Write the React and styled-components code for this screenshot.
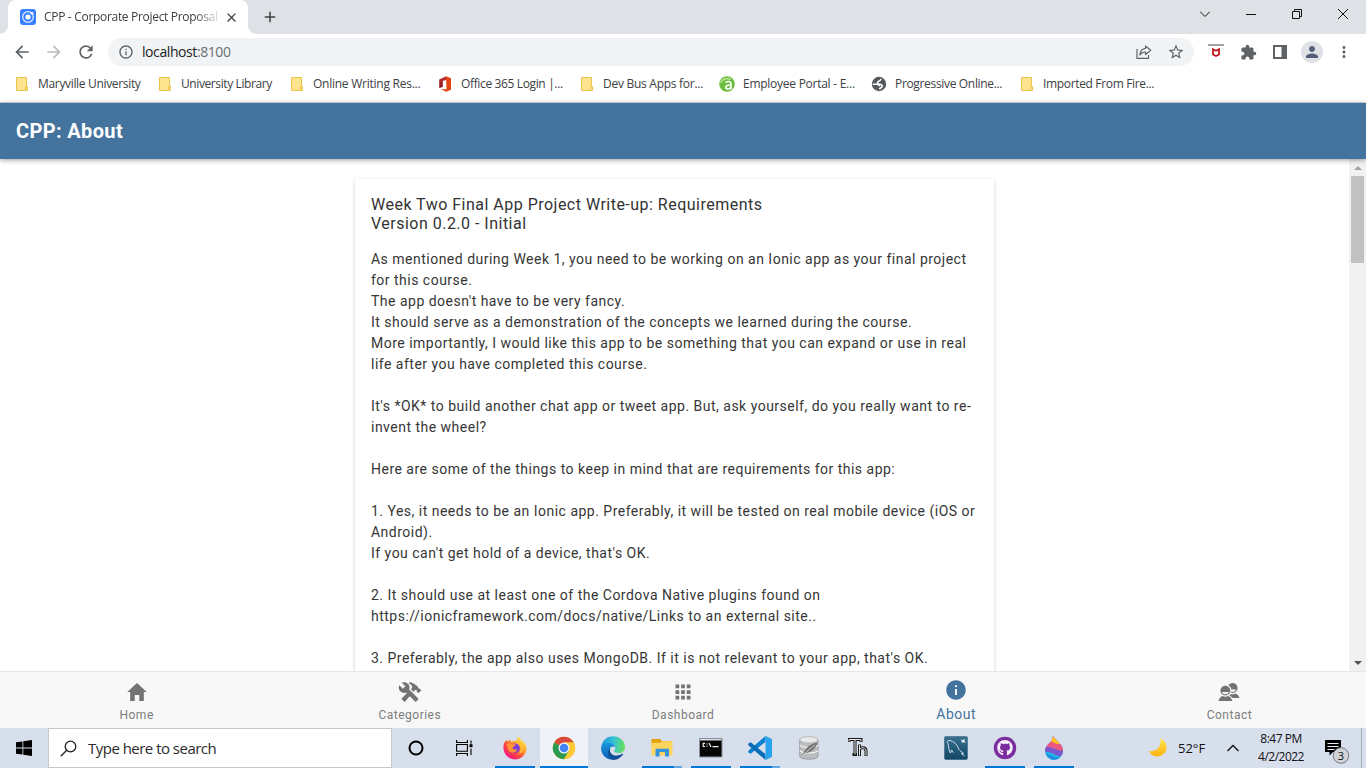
import React from "react";
import styled, { createGlobalStyle, css } from "styled-components";
import { IoMdHome, IoMdConstruct, IoMdApps, IoMdInformationCircle, IoMdContacts } from "react-icons/io";
import { MdArrowBack, MdArrowForward, MdRefresh, MdInfoOutline, MdStarBorder, MdExtension, MdMoreVert, MdPerson, MdClose, MdAdd } from "react-icons/md";
import { FaGithub } from "react-icons/fa";

const Global = createGlobalStyle`
  *, *::before, *::after { box-sizing: border-box; }
  html, body { margin: 0; height: 100%; overflow: hidden; }
  body { font-family: Roboto, "Liberation Sans", sans-serif; background: #fff; }
  svg { display: block; flex: none; }
`;

const uiFont = css`
  font-family: "Open Sans", "Noto Sans", sans-serif;
`;

const Screen = styled.div`
  display: flex;
  flex-direction: column;
  width: 1366px;
  height: 768px;
  overflow: hidden;
`;

/* ---------- Browser chrome ---------- */

const TabStrip = styled.div`
  display: flex;
  height: 34px;
  padding-left: 8px;
  background: #dee1e6;
  color: #3c4043;
`;

const BrowserTab = styled.div`
  position: relative;
  display: flex;
  align-items: center;
  width: 240px;
  padding: 0 9px 0 12px;
  background: #fff;
  border-radius: 8px 8px 0 0;
  &::before, &::after {
    content: "";
    position: absolute;
    bottom: 0;
    width: 8px;
    height: 8px;
  }
  &::before { left: -8px; background: radial-gradient(circle at 0 0, #dee1e6 7.5px, #fff 8px); }
  &::after { right: -8px; background: radial-gradient(circle at 100% 0, #dee1e6 7.5px, #fff 8px); }
`;

const TabTitle = styled.div`
  ${uiFont}
  flex: 1;
  margin: 0 6px 0 8px;
  white-space: nowrap;
  font-size: 12px;
  line-height: 18px;
  letter-spacing: -0.31px;
  mask-image: linear-gradient(to right, #000 152px, rgba(0, 0, 0, 0.15) 174px);
`;

const NewTab = styled.div`
  display: flex;
  align-items: center;
  padding-left: 13px;
`;

const WindowControls = styled.div`
  display: flex;
  margin-left: auto;
  color: #111;
`;

const WindowButton = styled.div`
  display: flex;
  align-items: center;
  justify-content: center;
  width: 46px;
  height: 28px;
`;

const Toolbar = styled.div`
  display: flex;
  align-items: center;
  height: 36px;
  background: #fff;
  color: #5f6368;
`;

const NavButtons = styled.div`
  display: flex;
  align-items: center;
  gap: 12px;
  width: 108px;
  padding-left: 12px;
`;

const AddressBar = styled.div`
  ${uiFont}
  display: flex;
  align-items: center;
  width: 1086px;
  height: 28px;
  padding: 0 9px 0 10px;
  border-radius: 14px;
  background: #f1f3f4;
  font-size: 14px;
  letter-spacing: -0.42px;
`;

const Url = styled.span`
  flex: 1;
  margin-left: 8px;
  padding-bottom: 2px;
  color: #202124;
  span { color: #6b6f74; }
`;

const AddressActions = styled.div`
  display: flex;
  align-items: center;
  gap: 15px;
`;

const Extensions = styled.div`
  display: flex;
  align-items: center;
  margin-left: 14px;
`;

const ExtSlot = styled.div`
  display: flex;
  justify-content: center;
  align-items: center;
  width: 32px;
  margin-left: ${(p) => (p.$first ? -8 : 0)}px;
`;

const Avatar = styled.div`
  display: flex;
  align-items: center;
  justify-content: center;
  width: 22px;
  height: 22px;
  border-radius: 50%;
  background: #dee1e6;
  color: #56607a;
`;

const BookmarksBar = styled.div`
  ${uiFont}
  display: flex;
  height: 33px;
  padding: 0 0 5px 14px;
  border-bottom: 1px solid #dadce0;
  background: #fff;
  color: #3c4043;
  font-size: 12px;
`;

const Bookmark = styled.div`
  display: flex;
  align-items: center;
  width: ${(p) => p.$width}px;
  white-space: nowrap;
  letter-spacing: ${(p) => p.$spacing}px;
  svg { margin-right: 8px; }
`;

/* ---------- App ---------- */

const AppHeader = styled.header`
  position: relative;
  z-index: 2;
  flex: none;
  display: flex;
  align-items: center;
  height: 56px;
  padding-left: 16px;
  background: #44739e;
  color: #fff;
  font-size: 20px;
  font-weight: 700;
  letter-spacing: 0.36px;
  box-shadow: 0 1px 5px rgba(0, 0, 0, 0.4);
`;

const Content = styled.div`
  display: flex;
  flex: none;
  height: 512px;
  overflow: hidden;
`;

const Page = styled.main`
  flex: 1;
  padding-top: 20px;
  overflow: hidden;
`;

const Card = styled.article`
  width: 639px;
  height: 620px;
  margin: 0 auto;
  padding: 16px 16px;
  border-radius: 4px;
  background: #fff;
  box-shadow: 0 3px 1px -2px rgba(0, 0, 0, 0.2), 0 2px 2px rgba(0, 0, 0, 0.14), 0 1px 5px rgba(0, 0, 0, 0.12);
`;

const CardTitle = styled.h1`
  margin: 0 0 16px;
  color: #333;
  font-size: 16px;
  font-weight: 400;
  line-height: 19px;
  letter-spacing: 0.485px;
  white-space: nowrap;
`;

const CardLine = styled.div`
  height: 21px;
  color: #363636;
  font-size: 14px;
  line-height: 21px;
  letter-spacing: 0.49px;
  white-space: nowrap;
`;

const Scrollbar = styled.div`
  display: flex;
  flex-direction: column;
  justify-content: space-between;
  width: 17px;
  background: #f1f1f1;
`;

const ScrollArrow = styled.div`
  display: flex;
  align-items: center;
  justify-content: center;
  height: 17px;
`;

const Thumb = styled.div`
  width: 13px;
  height: 87px;
  margin: 0 auto auto 2px;
  background: #c1c1c1;
`;

const TabBar = styled.nav`
  position: relative;
  flex: none;
  display: flex;
  height: 57px;
  border-top: 1px solid #e6e6e6;
  background: #f8f8f8;
`;

const TabItem = styled.div`
  display: flex;
  flex: 1;
  flex-direction: column;
  align-items: center;
  padding-top: ${(p) => (p.$active ? 6 : 8)}px;
  color: ${(p) => (p.$active ? "#44739e" : "#737373")};
`;

const TabLabel = styled.span`
  margin-top: ${(p) => (p.$active ? 4 : 3)}px;
  color: ${(p) => (p.$active ? "#44739e" : "#7c7c7c")};
  font-size: ${(p) => (p.$active ? 14 : 12)}px;
  line-height: 16px;
  letter-spacing: 0.5px;
`;

/* ---------- Windows taskbar ---------- */

const Taskbar = styled.footer`
  ${uiFont}
  display: flex;
  flex: none;
  height: 40px;
  background: #d7deec;
  color: #111;
`;

const StartButton = styled.div`
  display: flex;
  align-items: center;
  justify-content: center;
  width: 48px;
`;

const SearchBox = styled.div`
  display: flex;
  align-items: center;
  width: 344px;
  padding-left: 11px;
  border: 1px solid #c6c8cc;
  background: #fff;
  color: #2b2b2b;
  font-size: 15px;
  letter-spacing: -0.52px;
  svg { margin-right: 11px; }
`;

const Slot = styled.div`
  position: relative;
  display: flex;
  align-items: center;
  justify-content: center;
  width: 48px;
  margin-left: ${(p) => p.$gap ?? 1}px;
  background: ${(p) => (p.$focused ? "#eff2f8" : "transparent")};
`;

const Underline = styled.div`
  position: absolute;
  left: ${(p) => (p.$wide ? 0 : 4)}px;
  right: ${(p) => (p.$wide ? 0 : 4)}px;
  bottom: 0;
  height: 2px;
  background: ${(p) => (p.$stacked ? "linear-gradient(to right, #0078d7 32px, #62aae6 32px)" : "#0078d7")};
`;

const Tray = styled.div`
  display: flex;
  align-items: center;
  margin-left: auto;
  padding-right: 4px;
`;

const Temperature = styled.span`
  width: 49px;
  margin-left: 10px;
  font-size: 13px;
  letter-spacing: 0;
`;

const Clock = styled.div`
  width: 70px;
  margin: 0 8px 0 7px;
  font-size: 12px;
  line-height: 18px;
  letter-spacing: -0.5px;
  text-align: center;
  white-space: nowrap;
`;

const Notifications = styled.div`
  padding-top: 7px;
`;

const ShowDesktop = styled.div`
  width: 1px;
  height: 40px;
  margin-left: 11px;
  background: #a5abb8;
`;

/* ---------- Icons ---------- */

const IonicFavicon = () => (
  <svg width="16" height="16" viewBox="0 0 16 16">
    <rect width="16" height="16" rx="3" fill="#3880ff" />
    <circle cx="8" cy="8" r="5.300" fill="none" stroke="#d9e7ff" strokeWidth="1.300" />
    <circle cx="8" cy="8" r="2.600" fill="#fff" />
    <circle cx="12" cy="4.200" r="1.300" fill="#fff" />
  </svg>
);

const FolderIcon = () => (
  <svg width="16" height="16" viewBox="0 0 16 16">
    <path d="M2.500 1.500h10v9.200h1v3.800h-11z" fill="#ffe48f" stroke="#e8c44a" />
    <path d="M11.500 14v-3.300h2" fill="none" stroke="#e8c44a" />
  </svg>
);

const OfficeIcon = () => (
  <svg width="16" height="16" viewBox="0 0 16 16">
    <defs>
      <linearGradient id="office" x1="0" y1="0" x2="0" y2="1">
        <stop offset="0" stopColor="#c0392b" />
        <stop offset="1" stopColor="#8f0f2a" />
      </linearGradient>
    </defs>
    <path d="M9 .2 2.200 3.600v8.300L5.800 11V5l3.700-1.300z" fill="url(#office)" />
    <path d="M9 .2 14 2.200v11.600L9 15.800 4 12.900l5.500.300z" fill="#e2450f" />
  </svg>
);

const PortalIcon = () => (
  <svg width="16" height="16" viewBox="0 0 16 16">
    <circle cx="8" cy="8" r="7.800" fill="#6cbd3f" />
    <path d="M6.500 6.300c2.500-1.600 5.500-.8 5.500 1.500v5.700M12 9C6 8.600 5.700 13 8.500 13c2 0 3.500-1.300 3.500-3" fill="none" stroke="#fff" strokeWidth="1.600" />
    <path d="M1.500 7C3 3.500 7 1.800 12 3.200" fill="none" stroke="#b5df8a" strokeWidth="1.600" />
  </svg>
);

const GlobeIcon = () => (
  <svg width="16" height="16" viewBox="0 0 16 16">
    <circle cx="8" cy="8" r="7.200" fill="#55585c" />
    <path d="M1.800 8.200h4.400c1.600 0 1.500 1.600 2.600 1.600M8.500 13.300c.2-2 2.700-1.200 2.700-3.300 0-2.600-4.700-1-4.700-3.300C6.500 4.900 9.800 5.400 10 2.800" fill="none" stroke="#fff" strokeWidth="1.600" />
  </svg>
);

const ShareIcon = () => (
  <svg width="16" height="16" viewBox="0 0 16 16" fill="none" stroke="#5f6368" strokeWidth="1.200">
    <path d="M1 5v9.400h11.500V11" />
    <path d="M9.500 2l5.200 4.300-5.200 4.200V8C6.500 8 5 9.200 3.900 11 4.200 7.400 6 4.800 9.500 4.400z" strokeLinejoin="round" />
  </svg>
);

const ShieldIcon = () => (
  <svg width="16" height="16" viewBox="0 0 16 16">
    <path d="M0 1h16" stroke="#a6a1a3" strokeWidth="2" />
    <path d="M5 5.300 8 6.800l3-1.500v5.200L8 12l-3-1.500z" fill="#fff" stroke="#c01818" strokeWidth="1.800" />
  </svg>
);

const SidePanelIcon = () => (
  <svg width="14" height="14" viewBox="0 0 14 14">
    <path d="M0 0h14v14H0zM2 2v10h6.500V2z" fill="#5f6368" fillRule="evenodd" />
  </svg>
);

const WindowIcon = ({ d }) => (
  <svg width="10" height="10" viewBox="0 0 10 10" fill="none" stroke="currentColor">
    <path d={d} />
  </svg>
);

const WindowsLogo = () => (
  <svg width="16" height="16" viewBox="0 0 16 16">
    <path d="M0 2.300 6.500 1.400V7.600H0zM7.300 1.300 16 0v7.600H7.300zM0 8.400h6.500v6.200L0 13.700zM7.300 8.400H16V16l-8.700-1.300z" fill="#000" />
  </svg>
);

const SearchIcon = () => (
  <svg width="17" height="17" viewBox="0 0 17 17" fill="none" stroke="#222" strokeWidth="1.300">
    <circle cx="10.500" cy="6.500" r="5.300" />
    <path d="M6.700 10.300.8 16.200" />
  </svg>
);

const CortanaIcon = () => (
  <svg width="16" height="16" viewBox="0 0 16 16">
    <circle cx="8" cy="8" r="6.500" fill="none" stroke="#000" strokeWidth="2" />
  </svg>
);

const TaskViewIcon = () => (
  <svg width="17" height="16" viewBox="0 0 17 16" fill="none" stroke="#000" strokeWidth="1.100">
    <path d="M.6 0v2.500h10.800V0M.6 16v-2.500h10.800V16M.6 4.500h10.800v6.800H.6zM15 .5v3.200M15 8.500v6.500" />
    <path d="M13.500 4.200h3v3h-3z" fill="#000" stroke="none" />
  </svg>
);

const FirefoxIcon = () => (
  <svg width="24" height="24" viewBox="0 0 24 24">
    <defs>
      <linearGradient id="fox" x1=".85" y1=".1" x2=".2" y2=".9">
        <stop offset="0" stopColor="#fff14a" />
        <stop offset=".35" stopColor="#ffa52a" />
        <stop offset=".65" stopColor="#ff4640" />
        <stop offset="1" stopColor="#f01a80" />
      </linearGradient>
    </defs>
    <path d="M15.200.3c-1.200 2-.9 3.500-2 4.800-1.800-.3-3.800 0-4.900.7L6.100 3.300 5.400 5.600 3 4.200C.7 7 .3 9.500.5 12.500c.4 6 5.300 11 11.500 11s11.500-5 11.500-11c0-3.300-1.700-6-3.300-7.200l.3 1.700C19 3.700 16.500 3.200 15.200.3z" fill="url(#fox)" />
    <circle cx="12" cy="12.200" r="4.800" fill="#7b3bdf" />
    <path d="M3.200 8c2-1.300 4.500-1.500 6 .1 1.300.3 2.800.1 3.600.6-.4 1.500-2.400 1.500-3 2.600-.4 2 2.300 3 4.700 1.700-1 4.500-7.300 4.800-9.300 1C4.200 12 4.500 9.500 3.200 8z" fill="#ff9233" />
    <path d="M13.800 5.500c3 1 5.500 4.200 4 7.800 1.500-.8 2-2.300 2-3.800 1.500 4.500-1.500 8.800-6 9.300 5-2.400 5.500-8 0-13.300z" fill="#ffc338" />
  </svg>
);

const ChromeIcon = () => (
  <svg width="24" height="24" viewBox="0 0 24 24">
    <circle cx="12" cy="12" r="11.200" fill="#fbc934" />
    <path d="M12 12 2.300 6.400A11.200 11.200 0 0 1 21.700 6.500H12z" fill="#d84a3c" />
    <path d="M12 12 2.300 6.400A11.200 11.200 0 0 0 12 23.200l5-8.500z" fill="#2d9a52" />
    <path d="M12 6.500h9.700A11.200 11.200 0 0 1 12 23.200l5-8.500z" fill="#fbc934" />
    <circle cx="12" cy="12" r="5.500" fill="#f4f7fb" />
    <circle cx="12" cy="12" r="4.300" fill="#4285f4" />
  </svg>
);

const EdgeIcon = () => (
  <svg width="24" height="24" viewBox="0 0 24 24">
    <defs>
      <linearGradient id="edgeTop" x1="0" y1=".4" x2="1" y2=".5">
        <stop offset="0" stopColor="#1797d8" />
        <stop offset=".5" stopColor="#34c2d5" />
        <stop offset="1" stopColor="#68e05c" />
      </linearGradient>
      <linearGradient id="edgeLow" x1="0" y1="0" x2="0" y2="1">
        <stop offset="0" stopColor="#1796de" />
        <stop offset="1" stopColor="#0c60b5" />
      </linearGradient>
    </defs>
    <path d="M.2 11.500C.8 4.800 5.600.2 12 .2 19 .2 24 5.200 24 11c0 4-3 6-6.200 6-3 0-4.600-1-4.600-2 0-.8 1.200-1.500 1.200-3.200 0-2.500-2.500-4.300-5.900-4.300-3.500 0-6.500 1.500-8.300 4z" fill="url(#edgeTop)" />
    <path d="M.2 11.500c1-3.200 4.300-5 8-4.800 3.400.2 5.800 2.200 6.100 4.700-1.200-1.400-4-1.300-5 .6-2 4 2 9.500 8.200 9.200-2.200 1.900-4.200 2.600-6.500 2.500C4.500 23.500-.4 18 .2 11.500z" fill="url(#edgeLow)" />
    <path d="M9.300 12c-2 4.600 3 9.200 9 7.100 1.300-.4 2.300-1 3.100-1.400.5-.2.900.2.600.7-2 3-5.300 5.200-9 5.400-5.500 0-8.500-8-3.700-11.800z" fill="#104f92" />
  </svg>
);

const ExplorerIcon = () => (
  <svg width="22" height="20" viewBox="0 0 22 20">
    <path d="M.5 1h8.600l1.800 2H21v6H.5z" fill="#dfa000" />
    <path d="M.5 4.800h8.700l1.700-1.600H21.500v14.300H.5z" fill="#ffd561" />
    <path d="M4.500 18.500v-7.700h13.500v7.700h-4v-4.500H8.500v4.500z" fill="#3593dd" />
  </svg>
);

const TerminalIcon = () => (
  <svg width="24" height="20" viewBox="0 0 24 20">
    <path d="M.5.500h22.500v18.500H.5z" fill="#050505" stroke="#8c929b" />
    <path d="M1 1h21.500v1.500H1z" fill="#d8dde4" />
    <path d="M6 5.300H4.200v3.200H6M8 5.500v1M8 7.800v1M10 5l2 4M13.500 8.700h6" fill="none" stroke="#eee" strokeWidth="1.200" />
  </svg>
);

const CodeIcon = () => (
  <svg width="24" height="24" viewBox="0 0 24 24">
    <path d="M17.500 5.800 2.700 17.800.3 16.400v-1.600L17.500 0z" fill="#0b7fd0" />
    <path d="M17.500 18.200 2.700 6.200.3 7.600v1.600L17.500 24z" fill="#086cb8" />
    <path d="M17.500 0 24 3v18l-6.500 3z" fill="#27a2ee" />
  </svg>
);

const DatabaseIcon = () => (
  <svg width="20" height="24" viewBox="0 0 20 24">
    <path d="M.7 4v16c0 4.300 18.300 4.300 18.300 0V4z" fill="#bcbdbe" stroke="#87898c" strokeWidth=".7" />
    <ellipse cx="9.800" cy="3.800" rx="9.100" ry="3.200" fill="#e9e9e9" stroke="#a4a6a8" strokeWidth=".7" />
    <path d="M.8 9c2 3.300 16 3.300 18.200 0M.8 14.500c2 3.300 16 3.300 18.200 0" fill="none" stroke="#f6f6f6" strokeWidth="1.300" />
    <path d="M2.500 20C6 14 9 8 18.500 6.500 17 13 11 17.500 5 17.300z" fill="#727476" />
    <path d="M4 19c4-4 8-7 12-10" fill="none" stroke="#ddd" strokeWidth=".8" />
  </svg>
);

const TypeIcon = () => (
  <svg width="20" height="20" viewBox="0 0 20 20" fill="none">
    <path d="M1 4V1.500h12V4M7 2v14.500M4.500 16.500h4.500M11.500 6.500V18M11.500 12c0-3 6.500-3 6.500.5V18" stroke="#181818" strokeWidth="3" />
    <path d="M1 3.500v-2h12v2M7 2v14.500M11.500 7v10.500M11.500 12c0-3 6.500-3 6.500.5v5" stroke="#e9eaec" strokeWidth="1" />
  </svg>
);

const DolphinIcon = () => (
  <svg width="24" height="24" viewBox="0 0 24 24">
    <defs>
      <linearGradient id="sea" x1="0" y1="0" x2="0" y2="1">
        <stop offset="0" stopColor="#38708f" />
        <stop offset="1" stopColor="#124765" />
      </linearGradient>
    </defs>
    <rect x=".3" y=".3" width="23.400" height="23.400" rx="2" fill="url(#sea)" stroke="#537b94" strokeWidth=".6" />
    <path d="M6.500 17C4 13 5 10 4 7.500 3 5.500 3 4.500 5 4.500c5 .5 8 4 10 9 1 1.500 3 2.500 4.500 3.800l-2 .4 3 2.300M6.500 17l1-3 2 2.700" fill="none" stroke="#d3e2ed" strokeWidth="1" />
    <path d="m16.500 3 2.300 1.200L21 2.700l-.5 2.500 1.500 1.600-2.800-.5-1.700.8.400-1.900z" fill="#eef4f8" />
  </svg>
);

const GithubIcon = () => (
  <svg width="24" height="24" viewBox="0 0 24 24">
    <circle cx="12" cy="12" r="11.200" fill="#7b2d9f" />
    <g transform="translate(4 3.800)">
      <FaGithub size={16} color="#f5edf8" />
    </g>
  </svg>
);

const DropIcon = () => (
  <svg width="20" height="24" viewBox="0 0 20 24">
    <defs>
      <clipPath id="drop">
        <path d="M9 0c2 4 10 8 10 15a9 9 0 0 1-18 0C1 8.500 9 6.500 9 0z" />
      </clipPath>
    </defs>
    <g clipPath="url(#drop)">
      <path d="M0 0h20v24H0z" fill="#22b5e8" />
      <path d="M0 0h20v18C13 24 9 14 0 16z" fill="#7b57ce" />
      <path d="M0 0h20v14C14 17 8 8 0 12z" fill="#ed5880" />
      <path d="M5 0h11v8C12 9 9 5 5 5z" fill="#ffc719" />
      <path d="M2 17c5 2 10 7 18 2v5H0z" fill="#1a7ee0" opacity=".6" />
    </g>
  </svg>
);

const MoonIcon = () => (
  <svg width="20" height="20" viewBox="0 0 20 20">
    <defs>
      <linearGradient id="moon" x1="0" y1="0" x2="0" y2="1">
        <stop offset="0" stopColor="#ffe54b" />
        <stop offset="1" stopColor="#ffb20b" />
      </linearGradient>
    </defs>
    <path d="M12 .5c8 3 8.500 12 2.500 16.300C9.500 20 3 18.500.8 13c7 1.500 13.500-4.500 11.200-12.500z" fill="url(#moon)" />
  </svg>
);

const NotificationIcon = () => (
  <svg width="26" height="26" viewBox="0 0 26 26">
    <path d="M1 1h16v12H9l-3.500 3.500V13H1z" fill="#000" />
    <path d="M3.500 4.500h11M3.500 7.500h11M3.500 10.500h7" stroke="#e8ecf5" />
    <circle cx="17" cy="16.500" r="7.800" fill="#d0d2d6" stroke="#777a80" />
    <text x="17" y="20.500" textAnchor="middle" fontSize="11" fontFamily="Open Sans" fill="#111">3</text>
  </svg>
);

/* ---------- Data ---------- */

const bookmarks = [
  { icon: FolderIcon, label: "Maryville University", width: 143, spacing: -0.33 },
  { icon: FolderIcon, label: "University Library", width: 132, spacing: -0.4 },
  { icon: FolderIcon, label: "Online Writing Res...", width: 148, spacing: -0.25 },
  { icon: OfficeIcon, label: "Office 365 Login |...", width: 142, spacing: -0.36 },
  { icon: FolderIcon, label: "Dev Bus Apps for...", width: 140, spacing: -0.27 },
  { icon: PortalIcon, label: "Employee Portal - E...", width: 152, spacing: -0.26 },
  { icon: GlobeIcon, label: "Progressive Online...", width: 148, spacing: -0.33 },
  { icon: FolderIcon, label: "Imported From Fire...", width: 150, spacing: -0.34 },
];

const lines = [
  "As mentioned during Week 1, you need to be working on an Ionic app as your final project",
  "for this course.",
  "The app doesn't have to be very fancy.",
  "It should serve as a demonstration of the concepts we learned during the course.",
  "More importantly, I would like this app to be something that you can expand or use in real",
  "life after you have completed this course.",
  "",
  "It's *OK* to build another chat app or tweet app. But, ask yourself, do you really want to re-",
  "invent the wheel?",
  "",
  "Here are some of the things to keep in mind that are requirements for this app:",
  "",
  "1. Yes, it needs to be an Ionic app. Preferably, it will be tested on real mobile device (iOS or",
  "Android).",
  "If you can't get hold of a device, that's OK.",
  "",
  "2. It should use at least one of the Cordova Native plugins found on",
  "https://ionicframework.com/docs/native/Links to an external site..",
  "",
  "3. Preferably, the app also uses MongoDB. If it is not relevant to your app, that's OK.",
];

const tabs = [
  { icon: IoMdHome, label: "Home" },
  { icon: IoMdConstruct, label: "Categories" },
  { icon: IoMdApps, label: "Dashboard" },
  { icon: IoMdInformationCircle, label: "About", active: true },
  { icon: IoMdContacts, label: "Contact" },
];

const pinned = [
  { icon: CortanaIcon, gap: 0 },
  { icon: TaskViewIcon, gap: 0 },
  { icon: FirefoxIcon, gap: 3, open: true },
  { icon: ChromeIcon, open: true, focused: true },
  { icon: EdgeIcon },
  { icon: ExplorerIcon, open: true, stacked: true },
  { icon: TerminalIcon, open: true },
  { icon: CodeIcon, open: true, stacked: true },
  { icon: DatabaseIcon },
  { icon: TypeIcon },
  { icon: DolphinIcon, gap: 50 },
  { icon: GithubIcon, open: true },
  { icon: DropIcon, open: true },
];

export default function App() {
  return (
    <Screen>
      <Global />
      <TabStrip>
        <BrowserTab>
          <IonicFavicon />
          <TabTitle>CPP - Corporate Project Proposal</TabTitle>
          <MdClose size={15} />
        </BrowserTab>
        <NewTab>
          <MdAdd size={18} />
        </NewTab>
        <WindowControls>
          <WindowButton><WindowIcon d="M0 2.500 5 7.500 10 2.500" /></WindowButton>
          <WindowButton><WindowIcon d="M0 5.500h10" /></WindowButton>
          <WindowButton><WindowIcon d="M.5 2.500h7v7h-7zM2.500 2.500v-2h7v7h-2" /></WindowButton>
          <WindowButton><WindowIcon d="M0 0l10 10M10 0 0 10" /></WindowButton>
        </WindowControls>
      </TabStrip>
      <Toolbar>
        <NavButtons>
          <MdArrowBack size={20} />
          <MdArrowForward size={20} color="#babcbe" />
          <MdRefresh size={20} />
        </NavButtons>
        <AddressBar>
          <MdInfoOutline size={16} />
          <Url>localhost<span>:8100</span></Url>
          <AddressActions>
            <ShareIcon />
            <MdStarBorder size={18} />
          </AddressActions>
        </AddressBar>
        <Extensions>
          <ExtSlot $first><ShieldIcon /></ExtSlot>
          <ExtSlot><MdExtension size={17} /></ExtSlot>
          <ExtSlot><SidePanelIcon /></ExtSlot>
          <ExtSlot><Avatar><MdPerson size={18} /></Avatar></ExtSlot>
          <ExtSlot><MdMoreVert size={18} /></ExtSlot>
        </Extensions>
      </Toolbar>
      <BookmarksBar>
        {bookmarks.map(({ icon: Icon, label, width, spacing }) => (
          <Bookmark key={label} $width={width} $spacing={spacing}>
            <Icon />
            {label}
          </Bookmark>
        ))}
      </BookmarksBar>

      <AppHeader>CPP: About</AppHeader>
      <Content>
        <Page>
          <Card>
            <CardTitle>
              Week Two Final App Project Write-up: Requirements
              <br />
              Version 0.2.0 - Initial
            </CardTitle>
            {lines.map((line, i) => (
              <CardLine key={i}>{line}</CardLine>
            ))}
          </Card>
        </Page>
        <Scrollbar>
          <ScrollArrow>
            <svg width="8" height="4" viewBox="0 0 8 4"><path d="M0 4 4 0l4 4z" fill="#a3a3a3" /></svg>
          </ScrollArrow>
          <Thumb />
          <ScrollArrow>
            <svg width="8" height="4" viewBox="0 0 8 4"><path d="M0 0l4 4 4-4z" fill="#505050" /></svg>
          </ScrollArrow>
        </Scrollbar>
      </Content>
      <TabBar>
        {tabs.map(({ icon: Icon, label, active }) => (
          <TabItem key={label} $active={active}>
            <Icon size={24} />
            <TabLabel $active={active}>{label}</TabLabel>
          </TabItem>
        ))}
      </TabBar>

      <Taskbar>
        <StartButton><WindowsLogo /></StartButton>
        <SearchBox>
          <SearchIcon />
          Type here to search
        </SearchBox>
        {pinned.map(({ icon: Icon, gap, open, focused, stacked }, i) => (
          <Slot key={i} $gap={gap} $focused={focused}>
            <Icon />
            {open && <Underline $wide={focused} $stacked={stacked} />}
          </Slot>
        ))}
        <Tray>
          <MoonIcon />
          <Temperature>52°F</Temperature>
          <svg width="12" height="8" viewBox="0 0 12 8" fill="none" stroke="#111" strokeWidth="1.300"><path d="M.5 7 6 1.500 11.500 7" /></svg>
          <Clock>
            8:47 PM
            <br />
            4/2/2022
          </Clock>
          <Notifications><NotificationIcon /></Notifications>
          <ShowDesktop />
        </Tray>
      </Taskbar>
    </Screen>
  );
}
